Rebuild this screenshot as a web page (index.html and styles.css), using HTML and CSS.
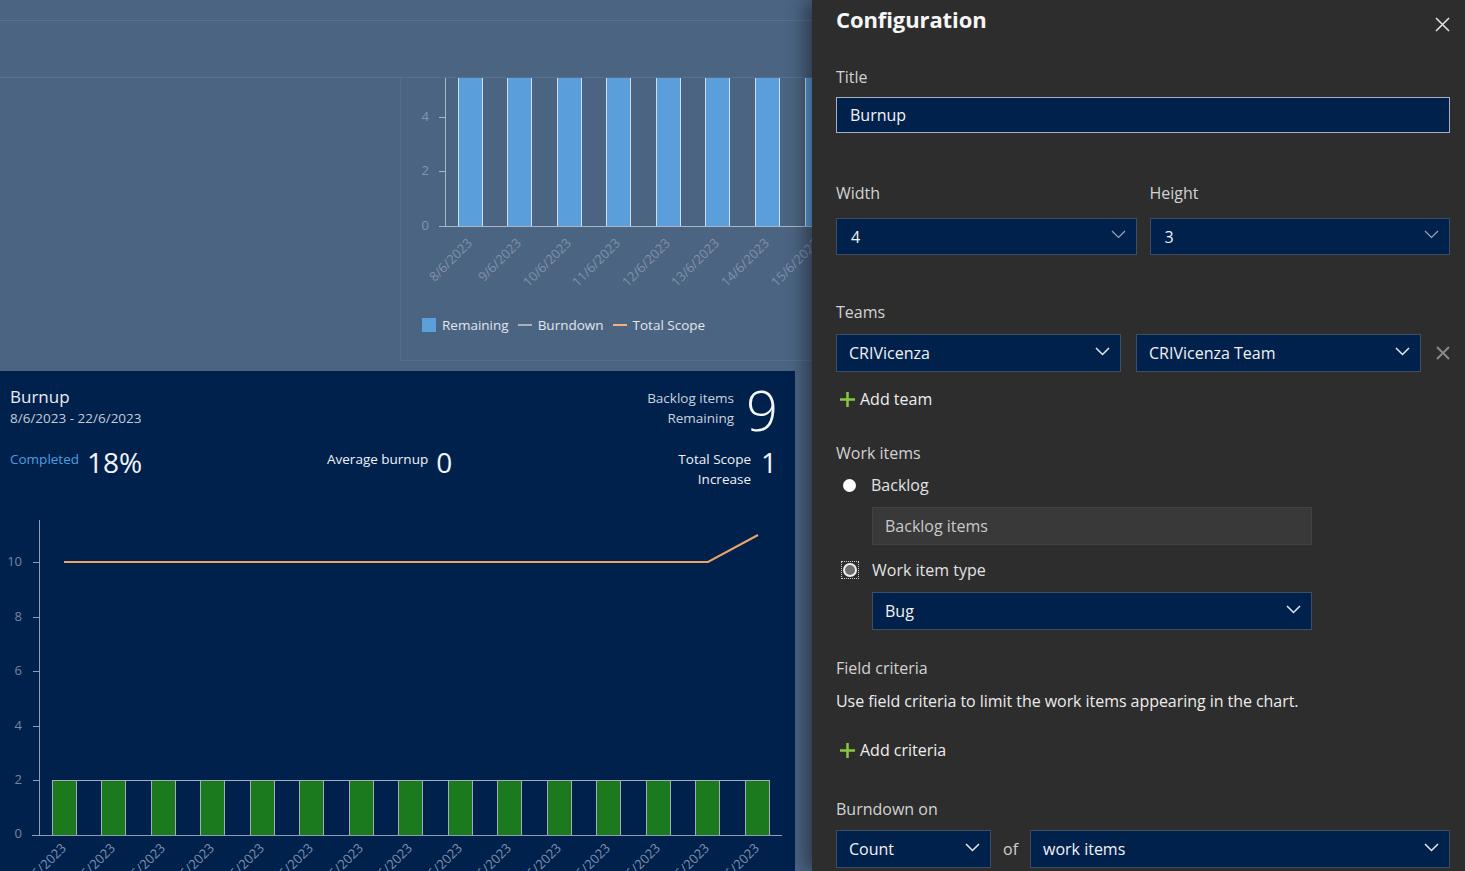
FILE: index.html
```html
<!DOCTYPE html>
<html lang="en">
<head>
<meta charset="utf-8">
<title>Burnup configuration</title>
<link rel="stylesheet" href="styles.css">
</head>
<body>
<div class="app">
  <main class="dashboard">
    <div class="topbar"></div>
    <div class="subbar"></div>
    <div class="upper-row">
      <div class="upper-spacer"></div>
      <section class="upper-widget">
        <svg class="upper-chart" width="411" height="218" viewBox="0 0 411 218">
          <g class="bars-blue">
            <rect x="57.5" y="-2" width="24" height="150.5"/>
            <rect x="106.5" y="-2" width="24" height="150.5"/>
            <rect x="156.5" y="-2" width="24" height="150.5"/>
            <rect x="205.5" y="-2" width="24" height="150.5"/>
            <rect x="255.5" y="-2" width="24" height="150.5"/>
            <rect x="304.5" y="-2" width="24" height="150.5"/>
            <rect x="354.5" y="-2" width="24" height="150.5"/>
            <rect x="404.5" y="-2" width="24" height="150.5"/>
          </g>
          <path class="axis-light" d="M44.5 0V148.5M38 148.5H411M38 39.5H44M38 93.5H44"/>
          <g class="tick-up">
            <text x="28" y="43">4</text>
            <text x="28" y="97">2</text>
            <text x="28" y="152">0</text>
          </g>
          <g class="date-up">
            <text transform="translate(72 166) rotate(-45)">8/6/2023</text>
            <text transform="translate(121 166) rotate(-45)">9/6/2023</text>
            <text transform="translate(171 166) rotate(-45)">10/6/2023</text>
            <text transform="translate(220 166) rotate(-45)">11/6/2023</text>
            <text transform="translate(270 166) rotate(-45)">12/6/2023</text>
            <text transform="translate(319 166) rotate(-45)">13/6/2023</text>
            <text transform="translate(369 166) rotate(-45)">14/6/2023</text>
            <text transform="translate(419 166) rotate(-45)">15/6/2023</text>
          </g>
        </svg>
        <div class="legend">
          <span class="legend-item"><span class="swatch"></span>Remaining</span>
          <span class="legend-item"><span class="dash dash-grey"></span>Burndown</span>
          <span class="legend-item"><span class="dash dash-orange"></span>Total Scope</span>
        </div>
      </section>
    </div>

    <section class="burnup">
      <div class="burnup-head">
        <div class="burnup-title">
          <div class="burnup-name">Burnup</div>
          <div class="burnup-dates">8/6/2023 - 22/6/2023</div>
        </div>
        <div class="metric metric-right">
          <div class="metric-label">Backlog items<br>Remaining</div>
          <div class="metric-huge">9</div>
        </div>
      </div>
      <div class="burnup-stats">
        <div class="metric">
          <div class="metric-label metric-blue">Completed</div>
          <div class="metric-big">18%</div>
        </div>
        <div class="metric">
          <div class="metric-label metric-white">Average burnup</div>
          <div class="metric-big">0</div>
        </div>
        <div class="metric metric-right">
          <div class="metric-label metric-white">Total Scope<br>Increase</div>
          <div class="metric-big">1</div>
        </div>
      </div>
      <svg class="burnup-chart" width="795" height="371" viewBox="0 0 795 371">
        <g class="bars-green">
          <rect x="52" y="280" width="25" height="55"/>
          <rect x="101" y="280" width="25" height="55"/>
          <rect x="151" y="280" width="25" height="55"/>
          <rect x="200" y="280" width="25" height="55"/>
          <rect x="250" y="280" width="25" height="55"/>
          <rect x="299" y="280" width="25" height="55"/>
          <rect x="349" y="280" width="25" height="55"/>
          <rect x="398" y="280" width="25" height="55"/>
          <rect x="448" y="280" width="25" height="55"/>
          <rect x="497" y="280" width="25" height="55"/>
          <rect x="547" y="280" width="25" height="55"/>
          <rect x="596" y="280" width="25" height="55"/>
          <rect x="646" y="280" width="25" height="55"/>
          <rect x="695" y="280" width="25" height="55"/>
          <rect x="745" y="280" width="25" height="55"/>
        </g>
        <path class="bar-grid" d="M52.5 280.5H769.5M52.5 280V335M76.5 280V335M101.5 280V335M125.5 280V335M151.5 280V335M175.5 280V335M200.5 280V335M224.5 280V335M250.5 280V335M274.5 280V335M299.5 280V335M323.5 280V335M349.5 280V335M373.5 280V335M398.5 280V335M422.5 280V335M448.5 280V335M472.5 280V335M497.5 280V335M521.5 280V335M547.5 280V335M571.5 280V335M596.5 280V335M620.5 280V335M646.5 280V335M670.5 280V335M695.5 280V335M719.5 280V335M745.5 280V335M769.5 280V335"/>
        <path class="axis-dark" d="M39.5 20V335M32 335.5H782M33 62.5H39M33 117.5H39M33 171.5H39M33 226.5H39M33 280.5H39"/>
        <path class="scope-line" d="M64 62H708L758 35"/>
        <g class="tick-down">
          <text x="22" y="66">10</text>
          <text x="22" y="121">8</text>
          <text x="22" y="175">6</text>
          <text x="22" y="230">4</text>
          <text x="22" y="284">2</text>
          <text x="22" y="338">0</text>
        </g>
        <g class="date-down">
          <text transform="translate(67 349) rotate(-45)">8/6/2023</text>
          <text transform="translate(116 349) rotate(-45)">9/6/2023</text>
          <text transform="translate(166 349) rotate(-45)">10/6/2023</text>
          <text transform="translate(215 349) rotate(-45)">11/6/2023</text>
          <text transform="translate(265 349) rotate(-45)">12/6/2023</text>
          <text transform="translate(314 349) rotate(-45)">13/6/2023</text>
          <text transform="translate(364 349) rotate(-45)">14/6/2023</text>
          <text transform="translate(413 349) rotate(-45)">15/6/2023</text>
          <text transform="translate(463 349) rotate(-45)">16/6/2023</text>
          <text transform="translate(512 349) rotate(-45)">17/6/2023</text>
          <text transform="translate(562 349) rotate(-45)">18/6/2023</text>
          <text transform="translate(611 349) rotate(-45)">19/6/2023</text>
          <text transform="translate(661 349) rotate(-45)">20/6/2023</text>
          <text transform="translate(710 349) rotate(-45)">21/6/2023</text>
          <text transform="translate(760 349) rotate(-45)">22/6/2023</text>
        </g>
      </svg>
    </section>
  </main>

  <aside class="config">
    <header class="config-head">
      <h1 class="config-title">Configuration</h1>
      <button class="close-btn" aria-label="Close">
        <svg width="15" height="15" viewBox="0 0 15 15"><path d="M1 1L14 14M14 1L1 14"/></svg>
      </button>
    </header>

    <div class="field field-title">
      <label class="field-label">Title</label>
      <div class="text-input">Burnup</div>
    </div>

    <div class="size-grid">
      <div class="field">
        <label class="field-label">Width</label>
        <div class="select select-size"><span>4</span><svg class="chev chev-light" width="15" height="9" viewBox="0 0 15 9"><path d="M1 1l6.5 6.5L14 1"/></svg></div>
      </div>
      <div class="field">
        <label class="field-label">Height</label>
        <div class="select select-size"><span>3</span><svg class="chev chev-light" width="15" height="9" viewBox="0 0 15 9"><path d="M1 1l6.5 6.5L14 1"/></svg></div>
      </div>
    </div>

    <div class="field field-teams">
      <label class="field-label">Teams</label>
      <div class="teams-row">
        <div class="select"><span>CRIVicenza</span><svg class="chev" width="15" height="9" viewBox="0 0 15 9"><path d="M1 1l6.5 6.5L14 1"/></svg></div>
        <div class="select"><span>CRIVicenza Team</span><svg class="chev" width="15" height="9" viewBox="0 0 15 9"><path d="M1 1l6.5 6.5L14 1"/></svg></div>
        <svg class="remove" width="14" height="14" viewBox="0 0 14 14"><path d="M1 1L13 13M13 1L1 13"/></svg>
      </div>
    </div>

    <div class="add-link add-team">
      <svg class="plus" width="15" height="15" viewBox="0 0 15 15"><path d="M7.5 0V15M0 7.5H15"/></svg>
      <span>Add team</span>
    </div>

    <div class="field field-work">
      <label class="field-label">Work items</label>
      <div class="radio-row radio-backlog">
        <span class="radio radio-filled"></span>
        <span>Backlog</span>
      </div>
      <div class="sub-box">Backlog items</div>
      <div class="radio-row radio-type">
        <span class="radio-focus"><span class="radio radio-ring"></span></span>
        <span>Work item type</span>
      </div>
      <div class="select select-sub"><span>Bug</span><svg class="chev" width="15" height="9" viewBox="0 0 15 9"><path d="M1 1l6.5 6.5L14 1"/></svg></div>
    </div>

    <div class="field field-criteria">
      <label class="field-label">Field criteria</label>
      <p class="help">Use field criteria to limit the work items appearing in the chart.</p>
    </div>

    <div class="add-link add-criteria">
      <svg class="plus" width="15" height="15" viewBox="0 0 15 15"><path d="M7.5 0V15M0 7.5H15"/></svg>
      <span>Add criteria</span>
    </div>

    <div class="field field-burndown">
      <label class="field-label">Burndown on</label>
      <div class="burndown-row">
        <div class="select select-count"><span>Count</span><svg class="chev" width="15" height="9" viewBox="0 0 15 9"><path d="M1 1l6.5 6.5L14 1"/></svg></div>
        <span class="of">of</span>
        <div class="select select-items"><span>work items</span><svg class="chev" width="15" height="9" viewBox="0 0 15 9"><path d="M1 1l6.5 6.5L14 1"/></svg></div>
      </div>
    </div>
  </aside>
</div>
</body>
</html>
```

FILE: styles.css
```css
* { box-sizing: border-box; }

html, body {
  margin: 0;
  padding: 0;
  width: 1465px;
  height: 871px;
  overflow: hidden;
  background: #4b6482;
  font-family: "Open Sans", "Noto Sans", sans-serif;
}

.app {
  display: flex;
  width: 1465px;
  height: 871px;
}

/* ---------- dashboard (dimmed) ---------- */
.dashboard {
  width: 812px;
  flex: none;
  overflow: hidden;
}

.topbar {
  height: 21px;
  border-bottom: 1px solid #59718f;
}

.subbar {
  height: 57px;
  border-bottom: 1px solid #59718f;
}

.upper-row {
  display: flex;
  height: 283px;
}

.upper-spacer {
  width: 400px;
  flex: none;
}

.upper-widget {
  flex: 1;
  border-left: 1px solid #566d8b;
  border-bottom: 1px solid #5e6b88;
  overflow: hidden;
}

.upper-chart {
  display: block;
  overflow: hidden;
}

.bars-blue rect {
  fill: #5a9fdc;
  stroke: #cde0f3;
  stroke-width: 1;
}

.axis-light {
  fill: none;
  stroke: #a9b6c6;
  stroke-width: 1;
}

.tick-up text {
  fill: #8595ab;
  font-size: 13px;
  text-anchor: end;
}

.date-up text {
  fill: #8190a8;
  font-size: 13px;
  text-anchor: end;
}

.legend {
  display: flex;
  align-items: center;
  gap: 9px;
  margin-top: 19px;
  padding-left: 21px;
  color: #e0e6ee;
  font-size: 13.5px;
  line-height: 20px;
}

.legend-item {
  display: flex;
  align-items: center;
  gap: 6px;
}

.swatch {
  width: 14px;
  height: 14px;
  background: #5aa0dc;
}

.dash {
  width: 14px;
  height: 2px;
}

.dash-grey { background: #a9b1bd; }
.dash-orange { background: #f2b27a; }

/* ---------- burnup widget ---------- */
.burnup {
  margin-top: 10px;
  width: 795px;
  height: 500px;
  background: #01214d;
  overflow: hidden;
  color: #e9edf3;
}

.burnup-head {
  display: flex;
  justify-content: space-between;
  align-items: flex-start;
  padding: 16px 17px 0 10px;
  height: 78px;
}

.burnup-name {
  font-size: 17px;
  line-height: 20px;
}

.burnup-dates {
  font-size: 13.5px;
  line-height: 22px;
  color: #c3cbd7;
}

.metric {
  display: flex;
  align-items: flex-start;
  gap: 8px;
}

.metric-right .metric-label {
  text-align: right;
}

.metric-label {
  font-size: 13.5px;
  line-height: 20px;
  color: #c9d1dc;
}

.metric-blue { color: #4b9fe1; }
.metric-white { color: #eef1f5; }

.burnup-head .metric-label {
  padding-top: 1px;
  margin-right: 4px;
}

.metric-huge {
  font-size: 56px;
  font-weight: 300;
  line-height: 44px;
  height: 44px;
  margin-top: 0;
  color: #f4f6f9;
}

.burnup-stats {
  display: grid;
  grid-template-columns: 317px 1fr auto;
  padding: 0 18px 0 10px;
  height: 51px;
}

.metric-big {
  font-size: 28px;
  font-weight: 400;
  line-height: 30px;
  margin-top: -2px;
  color: #f4f6f9;
}

.burnup-stats .metric-right .metric-label {
  margin-right: 2px;
}

.burnup-chart {
  display: block;
}

.bars-green rect {
  fill: #1c7a1e;
}

.bar-grid {
  fill: none;
  stroke: #a3acb9;
  stroke-width: 1;
}

.axis-dark {
  fill: none;
  stroke: #8e9cb3;
  stroke-width: 1;
}

.scope-line {
  fill: none;
  stroke: #eda466;
  stroke-width: 2;
}

.tick-down text {
  fill: #73879f;
  font-size: 13px;
  text-anchor: end;
}

.date-down text {
  fill: #7f90ab;
  font-size: 13px;
  text-anchor: end;
}

/* ---------- configuration panel ---------- */
.config {
  flex: 1;
  position: relative;
  z-index: 1;
  background: #2d2d2d;
  box-shadow: -6px 0 18px rgba(0, 0, 0, 0.45);
  padding: 0 15px 0 24px;
  color: #e8e8e8;
}

.config-head {
  display: flex;
  justify-content: space-between;
  align-items: flex-start;
  padding-top: 4px;
  height: 35px;
}

.config-title {
  margin: 0;
  font-size: 22px;
  font-weight: 700;
  line-height: 30px;
  color: #f6f6f6;
  letter-spacing: -0.1px;
}

.close-btn {
  background: none;
  border: 0;
  padding: 0;
  margin-top: 13px;
  width: 15px;
  height: 15px;
}

.close-btn svg {
  display: block;
}

.close-btn path {
  stroke: #e0e0e0;
  stroke-width: 1.6;
  fill: none;
}

.field-label {
  display: block;
  font-size: 16px;
  line-height: 20px;
  color: #d2d2d2;
}

.field-title { margin-top: 32px; }
.field-title .field-label { margin-bottom: 10px; }

.text-input {
  height: 36px;
  background: #01214d;
  border: 1px solid #a5b1c2;
  padding-left: 13px;
  font-size: 16px;
  line-height: 34px;
  color: #f4f4f4;
}

.size-grid {
  display: grid;
  grid-template-columns: 1fr 1fr;
  column-gap: 13px;
  margin-top: 50px;
}

.size-grid .field-label { margin-bottom: 16px; }

.select {
  display: flex;
  align-items: center;
  justify-content: space-between;
  height: 38px;
  background: #01214d;
  border: 1px solid #3f4d62;
  padding: 0 10px 0 12px;
  font-size: 16px;
  color: #f2f2f2;
}

.select span {
  line-height: 20px;
}

.select-size {
  height: 37px;
  padding-left: 14px;
  margin-top: -1px;
}

.chev {
  display: block;
  flex: none;
  margin-top: -4px;
}

.chev path {
  fill: none;
  stroke: #e6e9ee;
  stroke-width: 1.5;
}

.chev-light path {
  stroke: #9aa6b6;
  stroke-width: 1.2;
}

.field-teams { margin-top: 47px; }
.field-teams .field-label { margin-bottom: 12px; }

.teams-row {
  display: flex;
  align-items: center;
  gap: 15px;
}

.teams-row .select {
  width: 285px;
}

.remove path {
  fill: none;
  stroke: #8a8a8a;
  stroke-width: 2;
}

.add-link {
  display: flex;
  align-items: center;
  gap: 5px;
  font-size: 16px;
  line-height: 20px;
  color: #eeeeee;
  padding-left: 4px;
}

.add-link .plus path {
  fill: none;
  stroke: #8cc63f;
  stroke-width: 2.5;
}

.add-team { margin-top: 17px; }

.field-work { margin-top: 34px; }

.radio-row {
  display: flex;
  align-items: center;
  gap: 15px;
  font-size: 16px;
  line-height: 20px;
  color: #e2e2e2;
}

.radio-backlog {
  margin-top: 12px;
  padding-left: 7px;
}

.radio {
  display: block;
  width: 13px;
  height: 13px;
  border-radius: 50%;
}

.radio-filled {
  background: #ffffff;
}

.radio-ring {
  background: #6e6e6e;
  border: 2px solid #f0f0f0;
  width: 14px;
  height: 14px;
}

.radio-focus {
  display: block;
  padding: 1px;
  outline: 1px dotted #cfcfcf;
  margin-left: 6px;
  margin-right: -1px;
}

.sub-box {
  margin: 12px 0 0 36px;
  width: 440px;
  height: 38px;
  background: #393939;
  border: 1px solid #434343;
  padding-left: 12px;
  font-size: 16px;
  line-height: 36px;
  color: #c9c9c9;
}

.radio-type {
  margin-top: 15px;
}

.select-sub {
  margin: 12px 0 0 36px;
  width: 440px;
}

.field-criteria { margin-top: 28px; }

.help {
  margin: 13px 0 0;
  font-size: 16px;
  line-height: 20px;
  color: #ececec;
  letter-spacing: -0.05px;
}

.add-criteria { margin-top: 29px; }

.field-burndown { margin-top: 39px; }
.field-burndown .field-label { margin-bottom: 11px; }

.burndown-row {
  display: flex;
  align-items: center;
  gap: 12px;
}

.select-count { width: 155px; }
.select-items { flex: 1; }

.of {
  font-size: 16px;
  line-height: 20px;
  color: #cfcfcf;
}
```
